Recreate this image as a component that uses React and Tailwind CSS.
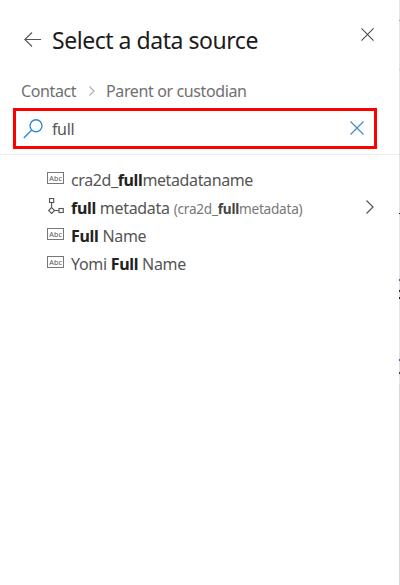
import React from "react";

function Cross({ className, size }) {
  return (
    <svg className={className} width={size} height={size} viewBox="0 0 14 14" fill="none" stroke="currentColor" strokeWidth="1.1">
      <path d="M.5 .5 13.5 13.5M13.5 .5 .5 13.5" />
    </svg>
  );
}

function FieldIcon() {
  return (
    <svg width="17" height="12" viewBox="0 0 17 12" className="shrink-0">
      <rect x=".5" y=".5" width="16" height="11" fill="#fff" stroke="#777" />
      <text x="2.3" y="8.6" fontSize="7" textLength="12.6" lengthAdjust="spacingAndGlyphs" fill="#555" fontFamily="Noto Sans, sans-serif">Abc</text>
    </svg>
  );
}

function RelationIcon() {
  return (
    <svg width="17" height="17" viewBox="0 0 17 17" fill="none" stroke="#555" strokeWidth="1.1" className="shrink-0">
      <rect x="2.5" y=".5" width="4.2" height="4" />
      <path d="M4.6 4.5v5M7.6 12.5H12" />
      <path d="M4.6 9.6 7.6 12.5l-3 2.9-3-2.9z" />
      <rect x="12" y="10.5" width="4.3" height="4" />
    </svg>
  );
}

const edgeMarks = [
  "h-5 bg-[#e3e3e3]",
  "h-px bg-[#76a9d8]",
  "h-12 bg-[#e3e3e3]",
  "h-px bg-[#c4c4c4]",
  "h-[143px] bg-[#e3e3e3]",
  "h-px bg-[#222]",
  "h-[65px] bg-[#e3e3e3]",
  "h-0.5 bg-[#4169c8]",
  "h-[9px] bg-[#e3e3e3]",
  "h-0.5 bg-[#333]",
  "h-[5px] bg-[#e3e3e3]",
  "h-0.5 bg-[#222]",
  "h-[60px] bg-[#e3e3e3]",
  "h-0.5 bg-[#2f5cc8]",
  "h-[11px] bg-[#e3e3e3]",
  "h-0.5 bg-[#444]",
  "h-[11px] bg-[#e3e3e3]",
  "grow bg-[#d8d8e2]",
];

export default function App() {
  return (
    <div className="flex h-[585px] w-[400px] overflow-hidden bg-white font-['Noto_Sans',sans-serif] text-[#555]">
      <main className="flex w-[399px] flex-col">
        <header className="flex h-[76px] items-start pr-[25px] pl-6">
          <svg className="mt-8 shrink-0 text-[#555]" width="17" height="16" viewBox="0 0 17 16" fill="none" stroke="currentColor" strokeWidth="1.1">
            <path d="M8 .5 .8 7.5 8 14.5M.8 7.5H17" />
          </svg>
          <h1 className="mt-6 ml-[11px] text-[23px] leading-8 tracking-[-0.46px] whitespace-nowrap text-[#1c1c1c]">Select a data source</h1>
          <Cross className="mt-7 ml-auto shrink-0 text-[#444]" size={13} />
        </header>

        <nav className="mb-0.5 flex h-[30px] items-center pl-[21px] text-[16px] tracking-[-0.38px] whitespace-nowrap text-[#707070]">
          <span className="w-[57px]">Contact</span>
          <svg className="mr-[11px] ml-[11px]" width="6" height="10" viewBox="0 0 6 10" fill="none" stroke="#aaa" strokeWidth="1.1">
            <path d="M.5 .5 5 5 .5 9.5" />
          </svg>
          <span>Parent or custodian</span>
        </nav>

        <div className="h-[47px] shrink-0 border-b border-[#ededed] pl-[13px]">
          <div className="flex h-[41px] w-[364px] items-center border-[3px] border-[#fe0000] pr-[10px] pl-[7px]">
            <svg width="20" height="20" viewBox="0 0 20 20" fill="none" stroke="#2788d8" strokeWidth="1.35">
              <circle cx="13" cy="6.7" r="6" />
              <path d="M8.8 11 .8 18.9" />
            </svg>
            <span className="ml-[9px] text-[16px] tracking-[-0.38px]">full</span>
            <Cross className="mb-0.5 ml-auto text-[#3f87bd]" size={14} />
          </div>
        </div>

        <ul className="mt-[11px] pl-[47px] text-[16px] leading-7 whitespace-nowrap">
          <li className="flex h-7 items-start">
            <span className="mt-1.5 mr-[7px]"><FieldIcon /></span>
            <span className="tracking-[-0.38px]">cra2d_<b className="text-[#222]">full</b>metadataname</span>
          </li>
          <li className="flex h-7 items-start">
            <span className="mt-1 mr-[7px]"><RelationIcon /></span>
            <span className="tracking-[-0.3px]"><b className="text-[#222]">full</b> metadata</span>
            <span className="mt-px ml-1 text-[13.6px] tracking-[-0.24px] text-[#777]">(cra2d_<b className="text-[#444]">full</b>metadata)</span>
            <svg className="mt-1.5 mr-[25px] ml-auto" width="8" height="14" viewBox="0 0 8 14" fill="none" stroke="#555" strokeWidth="1.2">
              <path d="M.5 .5 7 7 .5 13.5" />
            </svg>
          </li>
          <li className="flex h-7 items-start">
            <span className="mt-1.5 mr-[7px]"><FieldIcon /></span>
            <span className="tracking-[-0.3px]"><b className="text-[#222]">Full</b> Name</span>
          </li>
          <li className="flex h-7 items-start">
            <span className="mt-1.5 mr-[7px]"><FieldIcon /></span>
            <span className="tracking-[-0.3px]">Yomi <b className="text-[#222]">Full</b> Name</span>
          </li>
        </ul>
      </main>
      <div className="flex w-px flex-col">
        {edgeMarks.map((mark, i) => <span key={i} className={`w-px shrink-0 ${mark}`} />)}
      </div>
    </div>
  );
}
